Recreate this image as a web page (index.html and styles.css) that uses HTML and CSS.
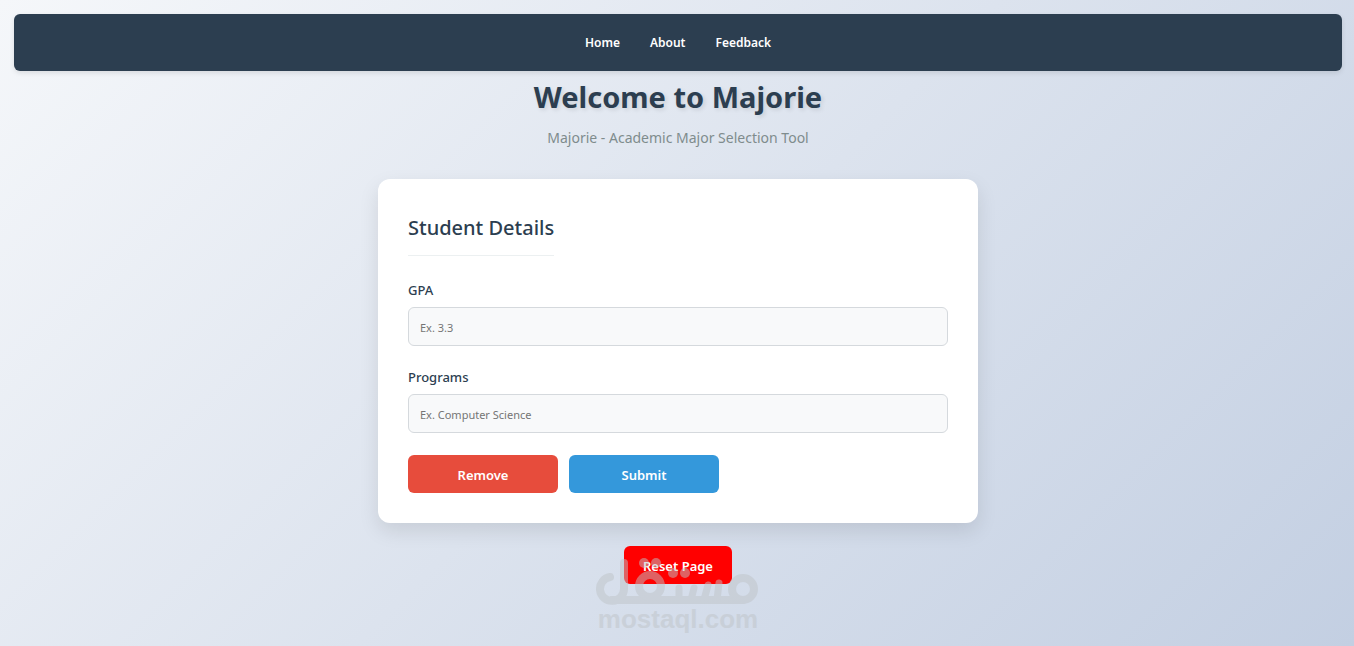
FILE: index.html
```html
<!DOCTYPE html>
<html lang="en">
<head>
    <meta charset="UTF-8">
    <meta name="viewport" content="width=device-width, initial-scale=1.0">
    <title>Majorie</title>
    <link rel="stylesheet" href="styles.css">
</head>
<body>
    <nav class="navbar">
        <a href="#home">Home</a>
        <a href="#about">About</a>
        <a href="#feedback">Feedback</a>
    </nav>

    <header class="page-header">
        <h1>Welcome to Majorie</h1>
        <p>Majorie - Academic Major Selection Tool</p>
    </header>

    <main>
        <form class="card">
            <h2>Student Details</h2>

            <div class="form-group">
                <label for="gpa">GPA</label>
                <input type="text" id="gpa" placeholder="Ex. 3.3">
            </div>

            <div class="form-group">
                <label for="programs">Programs</label>
                <input type="text" id="programs" placeholder="Ex. Computer Science">
            </div>

            <div class="form-buttons">
                <button type="button" class="btn btn-remove">Remove</button>
                <button type="submit" class="btn btn-submit">Submit</button>
            </div>
        </form>

        <div class="reset-area">
            <button type="button" class="btn btn-reset">Reset Page</button>
            <div class="watermark">
                <svg width="164" height="50" viewBox="0 0 164 50" fill="none" stroke="currentColor" stroke-width="8" stroke-linecap="round" stroke-linejoin="round" aria-hidden="true">
                    <path d="M14 20A12 12 0 1 0 28 32V6M16 43H147"/>
                    <circle cx="54" cy="29" r="11"/>
                    <circle cx="147" cy="32" r="11"/>
                    <path stroke-width="7" d="M83 31V43M98 31L95 43M112 28L108 43M123 26L121 43"/>
                    <g fill="currentColor" stroke="none">
                        <circle cx="48" cy="6" r="5"/>
                        <circle cx="60" cy="6" r="5"/>
                        <circle cx="77" cy="16" r="5"/>
                        <circle cx="89" cy="16" r="5"/>
                    </g>
                </svg>
                <span>mostaql.com</span>
            </div>
        </div>
    </main>
</body>
</html>
```
FILE: styles.css
```css
* {
    box-sizing: border-box;
}

body {
    margin: 0;
    min-height: 100vh;
    padding: 14px 12px 14px 14px;
    font-family: "Noto Sans", "Open Sans", sans-serif;
    color: #2c3e50;
    background: linear-gradient(135deg, #f5f7fa 0%, #c3cfe2 100%);
}

.navbar {
    display: flex;
    justify-content: center;
    align-items: center;
    gap: 30px;
    height: 57px;
    background: #2c3e50;
    border-radius: 6px;
    box-shadow: 0 2px 5px rgba(0, 0, 0, 0.1);
}

.navbar a {
    color: white;
    font-size: 12px;
    font-weight: 600;
    text-decoration: none;
}

.page-header {
    text-align: center;
}

.page-header h1 {
    margin: 6px 0 0;
    font-size: 29px;
    line-height: 40px;
    text-shadow: 2px 2px 4px rgba(0, 0, 0, 0.1);
}

.page-header p {
    margin: 11px 0 0;
    color: #7f8c8d;
    font-size: 14px;
    line-height: 20px;
}

.card {
    max-width: 600px;
    margin: 31px auto 0;
    padding: 30px;
    background: white;
    border-radius: 12px;
    box-shadow: 0 8px 20px rgba(0, 0, 0, 0.1);
}

.card h2 {
    width: fit-content;
    margin: 0 0 25px;
    padding: 2px 0 11px;
    font-size: 20px;
    font-weight: 500;
    line-height: 33px;
    border-bottom: 1px solid #ecf0f1;
}

.form-group {
    margin-bottom: 22px;
}

.form-group label {
    display: block;
    margin-bottom: 7px;
    font-size: 13px;
    font-weight: 500;
    line-height: 19px;
}

.form-group input {
    display: block;
    width: 100%;
    height: 39px;
    padding: 2px 11px 0;
    font-family: inherit;
    font-size: 11px;
    background: #f8f9fa;
    border: 1px solid #d5d9dd;
    border-radius: 6px;
}

.form-group input::placeholder {
    color: #757575;
}

.form-buttons {
    display: flex;
    gap: 11px;
}

.btn {
    height: 38px;
    padding: 2px 0 0;
    color: white;
    font-family: inherit;
    font-size: 13px;
    font-weight: 600;
    border: none;
    border-radius: 6px;
    cursor: pointer;
}

.btn-remove,
.btn-submit {
    width: 150px;
}

.btn-remove {
    background: #e74c3c;
}

.btn-submit {
    background: #3498db;
}

.reset-area {
    position: relative;
    margin-top: 23px;
    text-align: center;
}

.btn-reset {
    width: 108px;
    background: red;
}

/* logo stamp laid over the reset button */
.watermark {
    position: absolute;
    top: 11px;
    left: 50%;
    margin-left: -82px;
    color: #bfc4c8;
    opacity: 0.5;
    pointer-events: none;
}

.watermark svg {
    display: block;
}

.watermark span {
    display: block;
    font-family: "Liberation Sans", Arial, sans-serif;
    font-size: 26px;
    font-weight: bold;
    line-height: 24px;
}
```
